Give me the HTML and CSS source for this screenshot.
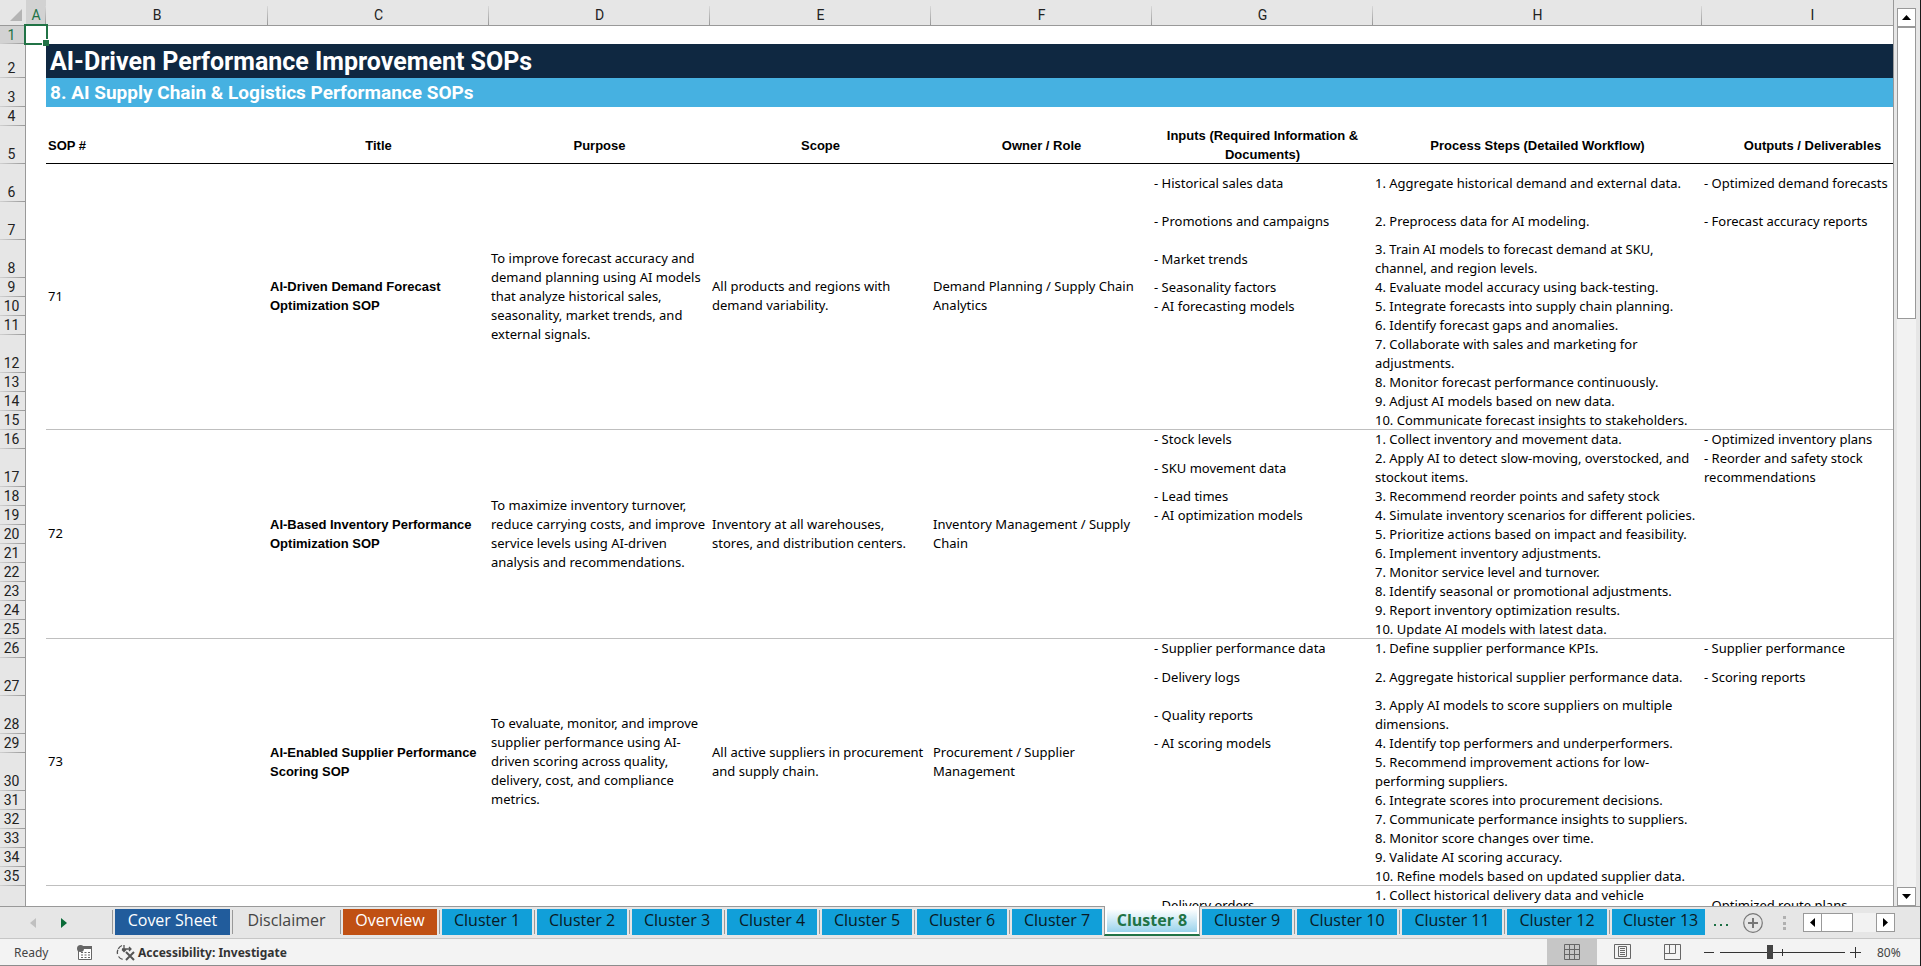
FILE: index.html
```html
<!DOCTYPE html>
<html lang="en">
<head>
<meta charset="utf-8">
<title>AI-Driven Performance Improvement SOPs</title>
<link rel="stylesheet" href="styles.css">
</head>
<body>
<main class="workspace">
  <div class="sheet">
    <table class="grid">
      <colgroup>
        <col class="w-num"><col class="w-a"><col class="w-b"><col class="w-std"><col class="w-std"><col class="w-std"><col class="w-std"><col class="w-std"><col class="w-steps"><col class="w-std">
      </colgroup>
      <thead>
        <tr>
          <th class="corner"><svg width="12" height="12" viewBox="0 0 12 12" aria-hidden="true"><path d="M12 0V12H0Z" fill="#b4b4b4"/></svg></th>
          <th class="on">A</th><th>B</th><th>C</th><th>D</th><th>E</th><th>F</th><th>G</th><th>H</th><th>I</th>
        </tr>
      </thead>
      <tbody>
        <tr class="r-first"><th class="on">1</th><td class="cell-a1"><div class="cursor"></div></td><td colspan="8"></td></tr>
        <tr class="r-title"><th>2</th><td></td><td colspan="8" class="title">AI-Driven Performance Improvement SOPs</td></tr>
        <tr class="r-sub"><th>3</th><td></td><td colspan="8" class="subtitle">8. AI Supply Chain &amp; Logistics Performance SOPs</td></tr>
        <tr class="r1"><th>4</th><td></td><td colspan="8"></td></tr>
        <tr class="r2 heads"><th>5</th><td></td><td class="left">SOP #</td><td>Title</td><td>Purpose</td><td>Scope</td><td>Owner / Role</td><td>Inputs (Required Information &amp;<br>Documents)</td><td>Process Steps (Detailed Workflow)</td><td>Outputs / Deliverables</td></tr>

        <tr class="r2"><th>6</th><td></td><td rowspan="10" class="end">71</td><td rowspan="10" class="end name">AI-Driven Demand Forecast<br>Optimization SOP</td><td rowspan="10" class="end">To improve forecast accuracy and<br>demand planning using AI models<br>that analyze historical sales,<br>seasonality, market trends, and<br>external signals.</td><td rowspan="10" class="end">All products and regions with<br>demand variability.</td><td rowspan="10" class="end">Demand Planning / Supply Chain<br>Analytics</td><td>- Historical sales data</td><td>1. Aggregate historical demand and external data.</td><td>- Optimized demand forecasts</td></tr>
        <tr class="r2"><th>7</th><td></td><td>- Promotions and campaigns</td><td>2. Preprocess data for AI modeling.</td><td>- Forecast accuracy reports</td></tr>
        <tr class="r2"><th>8</th><td></td><td>- Market trends</td><td>3. Train AI models to forecast demand at SKU,<br>channel, and region levels.</td><td></td></tr>
        <tr class="r1"><th>9</th><td></td><td>- Seasonality factors</td><td>4. Evaluate model accuracy using back-testing.</td><td></td></tr>
        <tr class="r1"><th>10</th><td></td><td>- AI forecasting models</td><td>5. Integrate forecasts into supply chain planning.</td><td></td></tr>
        <tr class="r1"><th>11</th><td></td><td></td><td>6. Identify forecast gaps and anomalies.</td><td></td></tr>
        <tr class="r2"><th>12</th><td></td><td></td><td>7. Collaborate with sales and marketing for<br>adjustments.</td><td></td></tr>
        <tr class="r1"><th>13</th><td></td><td></td><td>8. Monitor forecast performance continuously.</td><td></td></tr>
        <tr class="r1"><th>14</th><td></td><td></td><td>9. Adjust AI models based on new data.</td><td></td></tr>
        <tr class="r1"><th>15</th><td></td><td class="end"></td><td class="end">10. Communicate forecast insights to stakeholders.</td><td class="end"></td></tr>

        <tr class="r1"><th>16</th><td></td><td rowspan="10" class="end">72</td><td rowspan="10" class="end name">AI-Based Inventory Performance<br>Optimization SOP</td><td rowspan="10" class="end">To maximize inventory turnover,<br>reduce carrying costs, and improve<br>service levels using AI-driven<br>analysis and recommendations.</td><td rowspan="10" class="end">Inventory at all warehouses,<br>stores, and distribution centers.</td><td rowspan="10" class="end">Inventory Management / Supply<br>Chain</td><td>- Stock levels</td><td>1. Collect inventory and movement data.</td><td>- Optimized inventory plans</td></tr>
        <tr class="r2"><th>17</th><td></td><td>- SKU movement data</td><td>2. Apply AI to detect slow-moving, overstocked, and<br>stockout items.</td><td>- Reorder and safety stock<br>recommendations</td></tr>
        <tr class="r1"><th>18</th><td></td><td>- Lead times</td><td>3. Recommend reorder points and safety stock</td><td></td></tr>
        <tr class="r1"><th>19</th><td></td><td>- AI optimization models</td><td>4. Simulate inventory scenarios for different policies.</td><td></td></tr>
        <tr class="r1"><th>20</th><td></td><td></td><td>5. Prioritize actions based on impact and feasibility.</td><td></td></tr>
        <tr class="r1"><th>21</th><td></td><td></td><td>6. Implement inventory adjustments.</td><td></td></tr>
        <tr class="r1"><th>22</th><td></td><td></td><td>7. Monitor service level and turnover.</td><td></td></tr>
        <tr class="r1"><th>23</th><td></td><td></td><td>8. Identify seasonal or promotional adjustments.</td><td></td></tr>
        <tr class="r1"><th>24</th><td></td><td></td><td>9. Report inventory optimization results.</td><td></td></tr>
        <tr class="r1"><th>25</th><td></td><td class="end"></td><td class="end">10. Update AI models with latest data.</td><td class="end"></td></tr>

        <tr class="r1"><th>26</th><td></td><td rowspan="10" class="end">73</td><td rowspan="10" class="end name">AI-Enabled Supplier Performance<br>Scoring SOP</td><td rowspan="10" class="end">To evaluate, monitor, and improve<br>supplier performance using AI-<br>driven scoring across quality,<br>delivery, cost, and compliance<br>metrics.</td><td rowspan="10" class="end">All active suppliers in procurement<br>and supply chain.</td><td rowspan="10" class="end">Procurement / Supplier<br>Management</td><td>- Supplier performance data</td><td>1. Define supplier performance KPIs.</td><td>- Supplier performance</td></tr>
        <tr class="r2"><th>27</th><td></td><td>- Delivery logs</td><td>2. Aggregate historical supplier performance data.</td><td>- Scoring reports</td></tr>
        <tr class="r2"><th>28</th><td></td><td>- Quality reports</td><td>3. Apply AI models to score suppliers on multiple<br>dimensions.</td><td></td></tr>
        <tr class="r1"><th>29</th><td></td><td>- AI scoring models</td><td>4. Identify top performers and underperformers.</td><td></td></tr>
        <tr class="r2"><th>30</th><td></td><td></td><td>5. Recommend improvement actions for low-<br>performing suppliers.</td><td></td></tr>
        <tr class="r1"><th>31</th><td></td><td></td><td>6. Integrate scores into procurement decisions.</td><td></td></tr>
        <tr class="r1"><th>32</th><td></td><td></td><td>7. Communicate performance insights to suppliers.</td><td></td></tr>
        <tr class="r1"><th>33</th><td></td><td></td><td>8. Monitor score changes over time.</td><td></td></tr>
        <tr class="r1"><th>34</th><td></td><td></td><td>9. Validate AI scoring accuracy.</td><td></td></tr>
        <tr class="r1"><th>35</th><td></td><td class="end"></td><td class="end">10. Refine models based on updated supplier data.</td><td class="end"></td></tr>
        <tr class="r2"><th></th><td></td><td></td><td></td><td></td><td></td><td></td><td>- Delivery orders</td><td class="top">1. Collect historical delivery data and vehicle</td><td>- Optimized route plans</td></tr>
      </tbody>
    </table>
  </div>
  <div class="vscroll">
    <button class="sb" aria-label="Scroll up"><svg width="9" height="5" viewBox="0 0 9 5"><path d="M4.500 0L9 5H0Z"/></svg></button>
    <div class="vtrack"><div class="vthumb"></div></div>
    <button class="sb" aria-label="Scroll down"><svg width="9" height="5" viewBox="0 0 9 5"><path d="M0 0H9L4.500 5Z"/></svg></button>
  </div>
</main>

<nav class="tabbar">
  <div class="tabnav">
    <button class="arrow" aria-label="Previous sheets"><svg width="6" height="10" viewBox="0 0 6 10"><path d="M6 0V10L0 5Z" fill="#c0c0c0"/></svg></button>
    <button class="arrow" aria-label="Next sheets"><svg width="6" height="10" viewBox="0 0 6 10"><path d="M0 0V10L6 5Z" fill="#0a6b38"/></svg></button>
  </div>
  <ul class="tabs">
    <li><button class="tab cover">Cover Sheet</button></li>
    <li><button class="tab plain">Disclaimer</button></li>
    <li><button class="tab overview">Overview</button></li>
    <li><button class="tab">Cluster 1</button></li>
    <li><button class="tab">Cluster 2</button></li>
    <li><button class="tab">Cluster 3</button></li>
    <li><button class="tab">Cluster 4</button></li>
    <li><button class="tab">Cluster 5</button></li>
    <li><button class="tab">Cluster 6</button></li>
    <li><button class="tab">Cluster 7</button></li>
    <li class="active"><button class="tab">Cluster 8</button></li>
    <li><button class="tab">Cluster 9</button></li>
    <li><button class="tab wide">Cluster 10</button></li>
    <li><button class="tab wide">Cluster 11</button></li>
    <li><button class="tab wide">Cluster 12</button></li>
    <li><button class="tab cut">Cluster 13</button></li>
  </ul>
  <button class="more" aria-label="More sheets"><svg width="14" height="3" viewBox="0 0 14 3"><path d="M0 0H2V2H0ZM6 0H8V2H6ZM12 0H14V2H12Z" fill="#1c7044"/></svg></button>
  <button class="add" aria-label="New sheet"><svg width="20" height="20" viewBox="0 0 20 20" fill="none" stroke="#777"><circle cx="10" cy="10" r="9.300" stroke-width="1.200"/><path d="M5 10H15M10 5V15" stroke-width="2"/></svg></button>
  <svg class="grip" width="3" height="15" viewBox="0 0 3 15" aria-hidden="true"><path d="M0 1H3V4H0ZM0 7H3V10H0ZM0 12H3V15H0Z" fill="#b0b0b0"/></svg>
  <div class="hscroll">
    <button class="sb" aria-label="Scroll left"><svg width="5" height="9" viewBox="0 0 5 9"><path d="M5 0V9L0 4.500Z"/></svg></button>
    <div class="htrack"><div class="hthumb"></div></div>
    <button class="sb" aria-label="Scroll right"><svg width="5" height="9" viewBox="0 0 5 9"><path d="M0 0V9L5 4.500Z"/></svg></button>
  </div>
</nav>

<footer class="status">
  <span class="ready">Ready</span>
  <button class="icon macro" aria-label="Record macro"><svg width="15" height="15" viewBox="0 0 15 15"><path d="M1.500 5V14.500H14.500V1.500H6" fill="#fff" stroke="#666"/><path d="M6 1H15V4H6Z" fill="#666"/><circle cx="3.500" cy="3.500" r="3.500" fill="#666"/><path d="M4 7.500H6M7.500 7.500H9.500M11 7.500H13M4 10H6M7.500 10H9.500M11 10H13M4 12.500H6M7.500 12.500H9.500M11 12.500H13" stroke="#666"/></svg></button>
  <button class="access"><svg width="19" height="17" viewBox="0 0 19 17" fill="none" stroke="#555" stroke-width="1.300"><path d="M6 1.500A7.500 7.500 0 0 0 1.500 10M2.500 12.500A7.500 7.500 0 0 0 7 15.500" stroke-dasharray="5 1"/><path d="M6 5H15M13 3L15 5L13 7M8 1V7M6 5.500L8 7.500L10 5.500"/><path d="M10 8L18 16M18 8L10 16" stroke-width="2"/></svg>Accessibility: Investigate</button>
  <div class="views">
    <button class="view on" aria-label="Normal"><svg width="17" height="17" viewBox="0 0 17 17" fill="none" stroke="#666"><path d="M.5.5H15.500V15.500H.5ZM5.500 0V16M10.500 0V16M0 5.500H16M0 10.500H16"/></svg></button>
    <button class="view" aria-label="Page layout"><svg width="17" height="16" viewBox="0 0 17 16" fill="none" stroke="#666"><path d="M.5.5H16.500V14.500H.5ZM4.500 2.500H12.500V12.500H4.500ZM6 4.500H11M6 6.500H11M6 8.500H11M6 10.500H11"/></svg></button>
    <button class="view" aria-label="Page break preview"><svg width="17" height="16" viewBox="0 0 17 16" fill="none" stroke="#666"><path d="M.5.5H16.500V15.500H.5ZM5.500 0V9.500M0 9.500H11.500V0"/></svg></button>
  </div>
  <div class="zoom">
    <button class="icon" aria-label="Zoom out"><svg width="10" height="11" viewBox="0 0 10 11" stroke="#333"><path d="M0 5.500H10"/></svg></button>
    <input class="slider" type="range" min="0" max="200" value="79" aria-label="Zoom">
    <button class="icon" aria-label="Zoom in"><svg width="11" height="11" viewBox="0 0 11 11" stroke="#333"><path d="M0 5.500H11M5.500 0V11"/></svg></button>
    <span class="pct">80%</span>
  </div>
</footer>
</body>
</html>
```
FILE: styles.css
```css
* { box-sizing: border-box; }

body {
  margin: 0;
  height: 100vh;
  display: flex;
  flex-direction: column;
  overflow: hidden;
  background: #e6e6e6;
  border-right: 1px solid #1a1a1a;
  color: #000;
  font-family: "Noto Sans", "Open Sans", sans-serif;
  font-size: 13px;
}

button {
  border: 0;
  padding: 0;
  margin: 0;
  background: none;
  font: inherit;
  color: inherit;
  display: flex;
  align-items: center;
}

svg { display: block; flex: none; }

/* Sheet */
.workspace { flex: 1; min-height: 0; display: flex; }

.sheet {
  flex: 1;
  min-width: 0;
  overflow: hidden;
  background: linear-gradient(#e6e6e6 0 25px, #fff 25px);
  border-right: 1px solid #999;
}

.grid {
  width: 1922px;
  table-layout: fixed;
  border-collapse: separate;
  border-spacing: 0;
  line-height: 19px;
}

.w-num { width: 26px; }
.w-a { width: 20px; }
.w-b { width: 222px; }
.w-std { width: 221px; }
.w-steps { width: 329px; }

.grid th { font-weight: 400; padding: 0; }

.grid thead th {
  height: 26px;
  padding-top: 6px;
  font: 14px/19px Roboto, sans-serif;
  color: #222;
  border-bottom: 1px solid #999;
  background: linear-gradient(#d8d8d8, #999) right bottom / 1px 19px no-repeat #e6e6e6;
}

.grid thead .corner { padding: 4px 0 0 10px; background: #e6e6e6; }
.grid thead .on { background-color: #d2d2d2; color: #217346; }

.grid tbody th {
  font: 14px/19px Roboto, sans-serif;
  color: #222;
  vertical-align: bottom;
  text-align: center;
  padding-right: 2px;
  border-right: 1px solid #999;
  background: linear-gradient(90deg, #d0d0d0, #999) left bottom / 100% 1px no-repeat #e6e6e6;
}

.grid tbody .on { background-color: #d2d2d2; color: #217346; line-height: 18px; }

.grid td { padding: 0 2px; vertical-align: middle; white-space: nowrap; }
.grid td[rowspan] { padding-bottom: 2px; }
.grid .top { vertical-align: top; }

.r-first { height: 18px; }
.r-title { height: 34px; }
.r-sub { height: 29px; }
.r1 { height: 19px; }
.r2 { height: 38px; }

.grid .cell-a1 { position: relative; padding: 0; }
.cursor {
  position: absolute;
  inset: -2px -2px -1px -2px;
  border: 2px solid #217346;
}
.cursor::after {
  content: "";
  position: absolute;
  right: -3px;
  bottom: -3px;
  width: 6px;
  height: 6px;
  background: #217346;
  border: 1px solid #fff;
  border-width: 1px 0 0 1px;
}

.grid .title, .grid .subtitle {
  padding: 0 4px;
  color: #fff;
  font-family: Roboto, sans-serif;
  font-weight: 700;
}
.grid .title { padding-top: 2px; background: #0f2841; font-size: 25px; line-height: 32px; }
.grid .subtitle { background: #46b1e1; font-size: 19px; line-height: 29px; }

.heads td {
  font-family: "Liberation Sans", sans-serif;
  font-weight: 700;
  text-align: center;
  box-shadow: inset 0 -1px #000;
}
.heads td:nth-child(2) { box-shadow: none; }
.heads .left { text-align: left; }

.grid .end { box-shadow: inset 0 -1px #bfbfbf; }
.name { font-family: "Liberation Sans", sans-serif; font-weight: 700; }

/* Scrollbars */
.sb {
  flex: none;
  justify-content: center;
  background: #fff;
  border: 1px solid #999;
}

.vscroll {
  width: 26px;
  padding: 8px 4px 0 3px;
  display: flex;
  flex-direction: column;
}
.vscroll .sb { width: 19px; height: 19px; }
.vtrack { flex: 1; background: #f2f2f2; }
.vthumb { height: 34%; width: 19px; min-height: 20px; border: 1px solid #999; background: #fff; }

/* Tab bar */
.tabbar {
  height: 33px;
  flex: none;
  display: flex;
  align-items: center;
  border-top: 1px solid #999;
  border-bottom: 1px solid #c6c6c6;
  font: 16px/20px "Open Sans", sans-serif;
}

.tabnav { width: 112px; flex: none; display: flex; gap: 25px; padding-left: 30px; }

.tabs { list-style: none; display: flex; align-self: stretch; margin: 0; padding: 0; }
.tabs li {
  display: flex;
  align-items: flex-start;
  padding: 2px 2px 0 3px;
  background: linear-gradient(#999, #999) left 3px / 1px 24px no-repeat;
}

.tab {
  width: 90px;
  height: 26px;
  padding-bottom: 4px;
  justify-content: center;
  white-space: nowrap;
  overflow: hidden;
  background: #119fd9;
  color: #0a1a24;
}
.wide { width: 100px; }
.cut { width: 93px; justify-content: flex-start; padding-left: 11px; }
.cover { width: 115px; background: #215c9c; color: #fff; }
.plain { width: 103px; background: none; color: #444; }
.overview { width: 94px; background: #c05013; color: #fff; }

.tabs .active {
  margin-top: -1px;
  height: 30px;
  padding: 3px 2px 2px;
  background: #fff;
  border: solid #999;
  border-width: 0 1px;
  border-bottom: 2px solid #217346;
}
.tabs .active + li { padding-left: 2px; background: none; }
.active .tab {
  height: 23px;
  padding-bottom: 1px;
  background: linear-gradient(#fff, #9ad3ec);
  color: #217346;
  font-weight: 700;
}

.more { margin: 6px 15px 0 7px; }
.add { margin-right: 20px; }
.grip { margin-right: auto; }

.hscroll { display: flex; width: 92px; height: 19px; margin-right: 25px; flex: none; }
.hscroll .sb { width: 19px; }
.htrack { flex: 1; background: #f2f2f2; display: flex; }
.hthumb { width: 58%; background: #fff; border: 1px solid #999; border-left: 0; }

/* Status bar */
.status {
  height: 27px;
  flex: none;
  display: flex;
  align-items: center;
  background: #f3f3f3;
  border-bottom: 1px solid #8c8c8c;
  color: #444;
  font-size: 12px;
}
.ready { width: 63px; padding-left: 14px; box-sizing: content-box; }
.access { margin-left: 24px; gap: 3px; font-weight: 700; color: #333; }

.views { margin-left: auto; display: flex; align-self: stretch; }
.view { width: 50px; justify-content: center; }
.view.on { background: #c6c6c6; }

.zoom { display: flex; align-items: center; margin-left: 7px; width: 216px; }

.slider {
  appearance: none;
  width: 125px;
  height: 14px;
  margin: 0 5px 0 6px;
  background:
    linear-gradient(#333, #333) 62px 4px / 1px 7px no-repeat,
    linear-gradient(#333, #333) 0 7px / 100% 1px no-repeat;
}
.slider::-webkit-slider-thumb {
  appearance: none;
  width: 6px;
  height: 14px;
  background: #444;
}
.pct { margin-left: 16px; }
```
